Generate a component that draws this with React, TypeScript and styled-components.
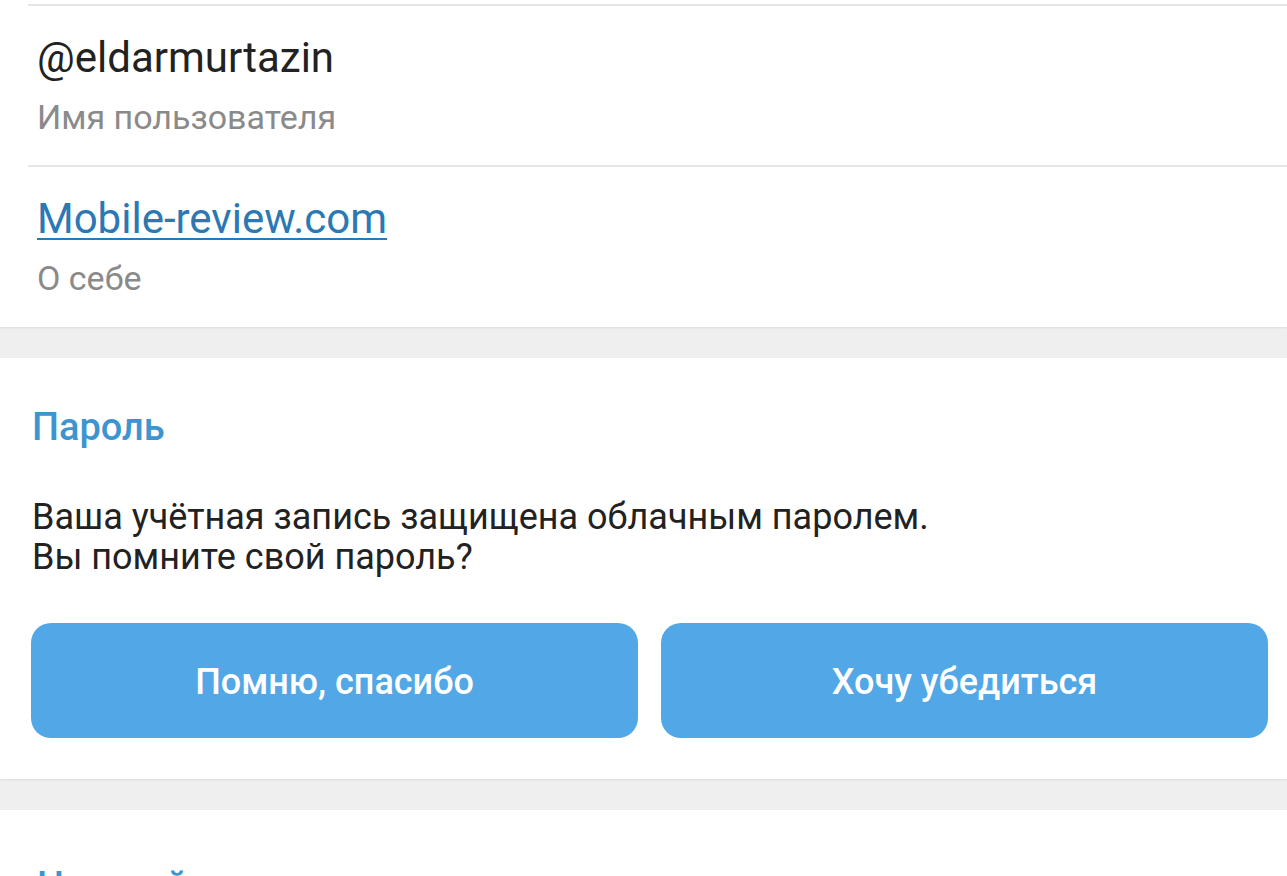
import styled, { createGlobalStyle } from 'styled-components';

const GlobalStyle = createGlobalStyle`
  html, body {
    margin: 0;
    padding: 0;
    background: #efefef;
  }
  body {
    font-family: Roboto, "Noto Sans", "Liberation Sans", sans-serif;
    overflow: hidden;
  }
`;

const Screen = styled.div`
  display: flex;
  flex-direction: column;
  gap: 31px;
  width: 1287px;
  height: 876px;
  overflow: hidden;
`;

const Card = styled.section`
  background: #ffffff;
  box-shadow: 0 1px 2px rgba(0, 0, 0, 0.08);
`;

const ProfileCard = styled(Card)`
  padding-top: 4px;
`;

const InfoRow = styled.div<{ $height: number }>`
  margin-left: 28px;
  padding: 27px 0 0 9px;
  height: ${(p) => p.$height}px;
  box-sizing: border-box;
  border-top: 2px solid #e6e6e6;
`;

const Value = styled.div`
  font-size: 42px;
  line-height: 50px;
  color: #222222;
`;

const Link = styled.a`
  display: inline-block;
  font-size: 42px;
  line-height: 50px;
  color: #2a78b4;
  text-decoration: underline;
  text-decoration-thickness: 2px;
  text-underline-offset: 5px;
`;

const Caption = styled.div`
  margin-top: 14px;
  font-size: 34px;
  line-height: 40px;
  color: #8a8a8a;
`;

const PasswordCard = styled(Card)`
  padding: 47px 19px 41px 31px;
`;

const SectionTitle = styled.h2`
  margin: 0 0 0 1px;
  font-size: 38px;
  line-height: 44px;
  font-weight: 500;
  color: #3d95d0;
`;

const Notice = styled.p`
  margin: 48px 0 0 1px;
  font-size: 36px;
  line-height: 40px;
  color: #222222;
`;

const ButtonRow = styled.div`
  display: grid;
  grid-template-columns: 1fr 1fr;
  gap: 23px;
  margin-top: 46px;
`;

const ActionButton = styled.button`
  height: 115px;
  padding-top: 3px;
  border: none;
  border-radius: 20px;
  background: #52a7e6;
  color: #ffffff;
  font-family: Roboto, "Noto Sans", sans-serif;
  font-size: 36px;
  font-weight: 500;
  cursor: pointer;
`;

const NextCard = styled(Card)`
  padding: 54px 0 0 36px;
  flex: 1;
`;

export default function App() {
  return (
    <>
      <GlobalStyle />
      <Screen>
        <ProfileCard>
          <InfoRow $height={161}>
            <Value>@eldarmurtazin</Value>
            <Caption>Имя пользователя</Caption>
          </InfoRow>
          <InfoRow $height={162}>
            <Link href="#">Mobile-review.com</Link>
            <Caption>О себе</Caption>
          </InfoRow>
        </ProfileCard>

        <PasswordCard>
          <SectionTitle>Пароль</SectionTitle>
          <Notice>
            Ваша учётная запись защищена облачным паролем.
            <br />
            Вы помните свой пароль?
          </Notice>
          <ButtonRow>
            <ActionButton>Помню, спасибо</ActionButton>
            <ActionButton>Хочу убедиться</ActionButton>
          </ButtonRow>
        </PasswordCard>

        <NextCard>
          <SectionTitle>Настройки</SectionTitle>
        </NextCard>
      </Screen>
    </>
  );
}
